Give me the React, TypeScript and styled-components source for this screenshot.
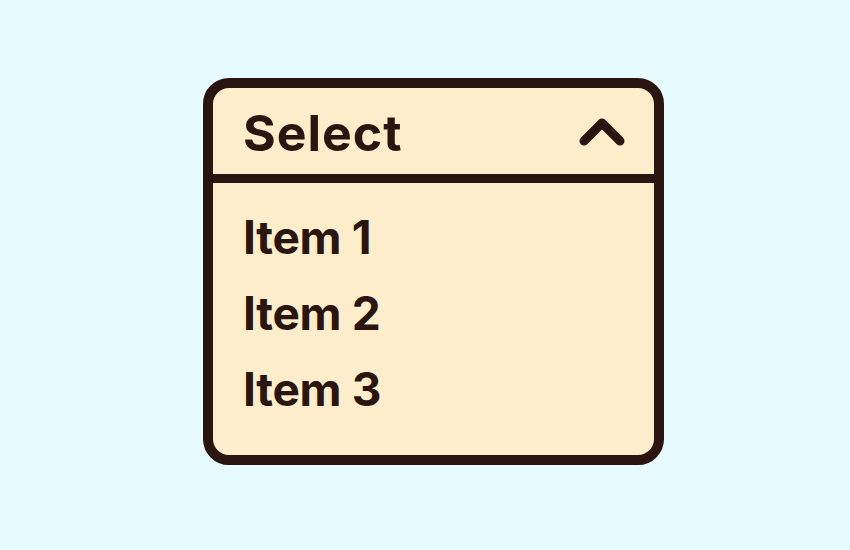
import React from "react";
import styled, { createGlobalStyle } from "styled-components";

const Global = createGlobalStyle`
  html, body { margin: 0; padding: 0; }
  body { background: #E7FBFE; width: 850px; height: 550px; overflow: hidden; }
`;

const Page = styled.div`
  width: 850px;
  height: 550px;
  display: flex;
  align-items: flex-start;
  justify-content: flex-start;
  padding: 78px 0 0 203px;
  box-sizing: border-box;
  font-family: Inter, "Noto Sans", sans-serif;
  color: #2A1511;
`;

const Box = styled.div`
  width: 461px;
  height: 387px;
  box-sizing: border-box;
  border: 10px solid #2A1511;
  border-radius: 26px;
  background: #FDEDCB;
  display: flex;
  flex-direction: column;
  overflow: hidden;
`;

const Header = styled.div`
  height: 86px;
  flex: none;
  display: flex;
  align-items: center;
  justify-content: space-between;
  padding: 0 28px 0 30px;
  border-bottom: 9px solid #2A1511;
`;

const Title = styled.span`
  font-size: 50px;
  font-weight: 700;
  letter-spacing: 1px;
  line-height: 1;
  margin-top: 3px;
`;

const List = styled.div`
  display: flex;
  flex-direction: column;
  padding: 30px 0 0 30px;
  gap: 28px;
`;

const Item = styled.div`
  font-size: 46px;
  font-weight: 700;
  letter-spacing: -0.3px;
  line-height: 48px;
`;

export default function App() {
  return (
    <>
      <Global />
      <Page>
        <Box>
          <Header>
            <Title>Select</Title>
            <svg width="48" height="32" viewBox="0 0 48 32">
              <path d="M6 26 L24 8 L42 26" fill="none" stroke="#2A1511" strokeWidth="9" strokeLinecap="round" strokeLinejoin="round" />
            </svg>
          </Header>
          <List>
            <Item>Item 1</Item>
            <Item>Item 2</Item>
            <Item>Item 3</Item>
          </List>
        </Box>
      </Page>
    </>
  );
}
